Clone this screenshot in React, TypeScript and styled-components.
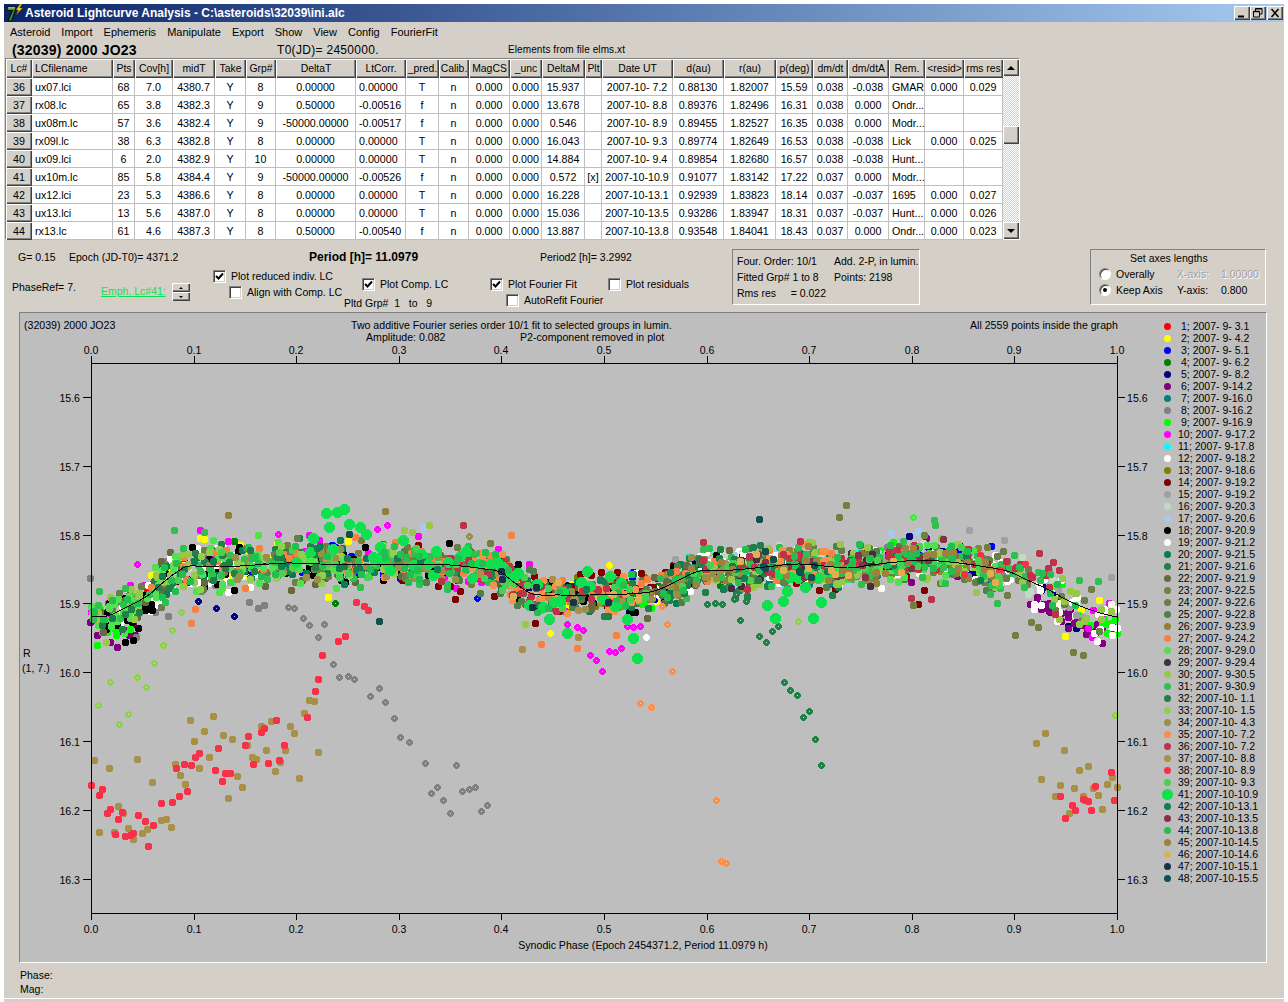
import React from "react";
import styled, { createGlobalStyle } from "styled-components";

const FONT = `"Liberation Sans", Arial, sans-serif`;
const FACE = "#d4d0c8";
const PLOT = "#bebebe";

const Global = createGlobalStyle`
  html, body { margin: 0; padding: 0; background: #fff; }
  body { font: 11px ${FONT}; color: #000; overflow: hidden; }
`;

const Page = styled.div`
  width: 1288px;
  height: 1002px;
  padding: 4px 4px 0;
  box-sizing: border-box;
  display: flex;
  flex-direction: column;
`;
const Win = styled.div`
  width: 1280px;
  height: 994px;
  background: ${FACE};
  display: flex;
  flex-direction: column;
  flex: none;
`;
const BottomStrip = styled.div`
  margin-top: 1px;
  height: 3px;
  background: ${FACE};
`;
const TitleBar = styled.div`
  height: 18px;
  display: flex;
  align-items: center;
  background: linear-gradient(90deg, #0a246a, #a6caf0);
  color: #fff;
  font-weight: bold;
  font-size: 12px;
  padding-left: 2px;
  padding-right: 1px;
`;
const TitleText = styled.span`
  margin-left: 2px;
  flex: 1;
  white-space: pre;
`;
const CapBtn = styled.button<{ $gap?: number }>`
  width: 16px;
  height: 14px;
  padding: 0;
  margin: 0 0 0 ${(p) => p.$gap ?? 0}px;
  border: 0;
  background: ${FACE};
  box-shadow: inset 1px 1px 0 #fff, inset -1px -1px 0 #404040, inset -2px -2px 0 #808080;
  display: flex;
  align-items: center;
  justify-content: center;
`;
const Menu = styled.div`
  height: 19px;
  display: flex;
  align-items: center;
  gap: 11px;
  padding-left: 6px;
`;
const MenuItem = styled.span`
  font-size: 11px;
  white-space: pre;
`;
const InfoRow = styled.div`
  height: 17px;
  display: flex;
  align-items: center;
  padding-left: 8px;
`;
const AstName = styled.span`
  width: 265px;
  font-weight: bold;
  font-size: 14px;
  letter-spacing: 0.2px;
`;
const T0 = styled.span`
  width: 231px;
  font-size: 12px;
  letter-spacing: 0.3px;
`;
const ElemText = styled.span`
  font-size: 10px;
  letter-spacing: 0.1px;
`;

const TableWrap = styled.div`
  margin-left: 1px;
  width: 1015px;
  height: 182px;
  box-sizing: border-box;
  display: flex;
  border-top: 1px solid #808080;
  border-left: 1px solid #808080;
  border-bottom: 1px solid #fff;
  border-right: 1px solid #fff;
  background: #fff;
`;
const Grid = styled.table`
  table-layout: fixed;
  border-collapse: separate;
  border-spacing: 0;
  width: 997px;
  font-size: 10.7px;
`;
const HeadCell = styled.th<{ $left?: boolean }>`
  height: 19px;
  padding: ${(p) => (p.$left ? "0 0 0 3px" : "0")};
  font-weight: normal;
  font-size: 10.4px;
  text-align: ${(p) => (p.$left ? "left" : "center")};
  white-space: nowrap;
  overflow: hidden;
  background: ${FACE};
  box-shadow: inset 1px 1px 0 #fff, inset -1px -1px 0 #404040, inset -2px -2px 0 #808080;
`;
const RowHead = styled.td`
  height: 18px;
  padding: 0;
  text-align: center;
  background: ${FACE};
  box-shadow: inset 1px 1px 0 #fff, inset -1px -1px 0 #404040, inset -2px -2px 0 #808080;
`;
const Cell = styled.td<{ $align?: string }>`
  height: 18px;
  box-sizing: border-box;
  padding: ${(p) => (p.$align === "left" ? "0 0 0 3px" : "0")};
  text-align: ${(p) => p.$align ?? "center"};
  white-space: pre;
  overflow: hidden;
  border-right: 1px solid #c0c0c0;
  border-bottom: 1px solid #c0c0c0;
`;
const ScrollBar = styled.div`
  width: 16px;
  display: flex;
  flex-direction: column;
  height: 180px;
`;
const ScrollBtn = styled.div<{ $h?: number }>`
  height: ${(p) => p.$h ?? 17}px;
  flex: none;
  background: ${FACE};
  box-shadow: inset 1px 1px 0 #fff, inset -1px -1px 0 #404040, inset -2px -2px 0 #808080;
  display: flex;
  align-items: center;
  justify-content: center;
`;
const ScrollTrack = styled.div<{ $h?: number }>`
  ${(p) => (p.$h ? `height:${p.$h}px;flex:none;` : "flex:1;")}
  background: repeating-conic-gradient(#fff 0 25%, ${FACE} 0 50%) 0 0 / 2px 2px;
`;
const Arrow = styled.span<{ $up?: boolean }>`
  width: 0;
  height: 0;
  border-left: 4px solid transparent;
  border-right: 4px solid transparent;
  ${(p) => (p.$up ? "border-bottom: 4px solid #000;" : "border-top: 4px solid #000;")}
`;

const Controls = styled.div`
  height: 72px;
  display: flex;
  flex: none;
  font-size: 10.5px;
`;
const LeftCol = styled.div`
  width: 728px;
  flex: none;
`;
const StatusRow = styled.div`
  display: flex;
  height: 14px;
  line-height: 14px;
  padding: 10px 0 0 14px;
`;
const StatusItem = styled.span<{ $w: number; $bold?: boolean }>`
  width: ${(p) => p.$w}px;
  flex: none;
  white-space: pre;
  font-weight: ${(p) => (p.$bold ? "bold" : "normal")};
  font-size: ${(p) => (p.$bold ? "12px" : "10.5px")};
`;
const OptionsRow = styled.div`
  display: flex;
  height: 48px;
  padding-left: 8px;
`;
const PhaseRef = styled.span`
  width: 89px;
  flex: none;
  margin-top: 16px;
  line-height: 14px;
`;
const Emph = styled.span`
  width: 71px;
  flex: none;
  margin-top: 20px;
  line-height: 14px;
  color: #10e050;
  text-decoration: underline;
`;
const SpinWrap = styled.div`
  width: 41px;
  flex: none;
  margin-top: 19px;
  display: flex;
  flex-direction: column;
`;
const SpinBtn = styled.div`
  width: 18px;
  height: 9px;
  background: ${FACE};
  box-shadow: inset 1px 1px 0 #fff, inset -1px -1px 0 #404040, inset -2px -2px 0 #808080;
  display: flex;
  align-items: center;
  justify-content: center;
`;
const SpinArrow = styled.span<{ $up?: boolean }>`
  width: 0;
  height: 0;
  border-left: 2px solid transparent;
  border-right: 2px solid transparent;
  ${(p) => (p.$up ? "border-bottom: 2px solid #000;" : "border-top: 2px solid #000;")}
`;
const OptCol = styled.div<{ $w: number; $top: number; $gap?: number }>`
  width: ${(p) => p.$w}px;
  flex: none;
  padding-top: ${(p) => p.$top}px;
  display: flex;
  flex-direction: column;
  gap: ${(p) => p.$gap ?? 0}px;
`;
const CheckRow = styled.label<{ $indent?: number }>`
  display: flex;
  align-items: center;
  height: 16px;
  gap: 5px;
  padding-left: ${(p) => p.$indent ?? 0}px;
  white-space: pre;
`;
const Box = styled.span`
  width: 13px;
  height: 13px;
  flex: none;
  box-sizing: border-box;
  background: #fff;
  border-top: 1px solid #808080;
  border-left: 1px solid #808080;
  border-right: 1px solid #fff;
  border-bottom: 1px solid #fff;
  box-shadow: inset 1px 1px 0 #404040, inset -1px -1px 0 ${FACE};
  display: flex;
  align-items: center;
  justify-content: center;
`;
const PltdText = styled.span`
  height: 16px;
  line-height: 16px;
  white-space: pre;
`;
const Group = styled.div<{ $ml: number; $w: number }>`
  margin: 9px 0 0 ${(p) => p.$ml}px;
  width: ${(p) => p.$w}px;
  height: 56px;
  box-sizing: border-box;
  flex: none;
  border-top: 1px solid #808080;
  border-left: 1px solid #808080;
  border-right: 1px solid #fff;
  border-bottom: 1px solid #fff;
`;
const FourierGrid = styled.div`
  padding: 3px 0 0 4px;
  display: grid;
  grid-template-columns: 97px 1fr;
  grid-auto-rows: 16px;
  align-items: center;
  white-space: pre;
`;
const AxesTitle = styled.div`
  height: 15px;
  padding-top: 1px;
  line-height: 14px;
  padding-left: 39px;
`;
const AxesGrid = styled.div`
  padding: 0 0 0 8px;
  display: grid;
  grid-template-columns: 78px 44px 1fr;
  grid-auto-rows: 16px;
  align-items: center;
`;
const RadioRow = styled.span`
  display: flex;
  align-items: center;
  gap: 5px;
`;
const Radio = styled.span<{ $on?: boolean }>`
  width: 12px;
  height: 12px;
  box-sizing: border-box;
  border-radius: 50%;
  background: #fff;
  border: 1px solid;
  border-color: #808080 #fff #fff #808080;
  box-shadow: inset 1px 1px 0 #404040;
  display: flex;
  align-items: center;
  justify-content: center;
  &::after {
    content: "";
    width: 4px;
    height: 4px;
    border-radius: 50%;
    background: ${(p) => (p.$on ? "#000" : "transparent")};
  }
`;
const Disabled = styled.span`
  color: #a0a0a0;
  text-shadow: 1px 1px 0 #fff;
`;

const PlotPanel = styled.div`
  margin-left: 15px;
  width: 1248px;
  height: 651px;
  flex: none;
  box-sizing: border-box;
  background: ${PLOT};
  border-top: 1px solid #808080;
  border-left: 1px solid #808080;
  border-right: 1px solid #fff;
  border-bottom: 1px solid #fff;
  display: flex;
`;
const ChartSvg = styled.svg`
  display: block;
  flex: none;
  width: 1140px;
  height: 649px;
`;
const SvgText = styled.text`
  font: 10.6px ${FONT};
  fill: #000;
`;
const AxisPart = styled.path`
  stroke: #000;
  stroke-width: 1;
  fill: none;
  shape-rendering: crispEdges;
`;
const FitCurve = styled.path`
  stroke: #000;
  stroke-width: 1;
  fill: none;
  shape-rendering: crispEdges;
`;
const Dots = styled.g`
  shape-rendering: crispEdges;
`;
const Legend = styled.div`
  padding-top: 7px;
  display: flex;
  flex-direction: column;
  font-size: 10.5px;
`;
const LegendRow = styled.div`
  height: 12px;
  display: flex;
  align-items: center;
  white-space: pre;
`;
const DotSlot = styled.span`
  width: 14px;
  margin-right: 4px;
  display: flex;
  align-items: center;
  justify-content: center;
`;
const Dot = styled.span<{ $big?: boolean }>`
  width: ${(p) => (p.$big ? 11 : 7)}px;
  height: ${(p) => (p.$big ? 11 : 7)}px;
  border-radius: 50%;
  flex: none;
`;
const LegendLabel = styled.span<{ $single?: boolean }>`
  padding-left: ${(p) => (p.$single ? 3 : 0)}px;
`;
const StatusBar = styled.div`
  flex: 1;
  padding: 5px 0 0 16px;
  line-height: 14px;
  font-size: 10.5px;
`;

const HEAD: [string, number][] = [
  ["Lc#", 26], ["LCfilename", 81], ["Pts", 22], ["Cov[h]", 38], ["midT", 42], ["Take", 31], ["Grp#", 30],
  ["DeltaT", 80], ["LtCorr.", 50], ["_pred.", 33], ["Calib.", 30], ["MagCS", 41], ["_unc", 32], ["DeltaM", 43],
  ["Plt", 17], ["Date UT", 71], ["d(au)", 51], ["r(au)", 52], ["p(deg)", 37], ["dm/dt", 35], ["dm/dtA", 41],
  ["Rem.", 36], ["<resid>", 39], ["rms res", 39],
];
const LEFT = new Set([1, 8, 21]);
const ROWS: string[][] = [
  ["36","ux07.lci","68","7.0","4380.7","Y","8","0.00000","0.00000","T","n","0.000","0.000","15.937","","2007-10- 7.2","0.88130","1.82007","15.59","0.038","-0.038","GMAR","0.000","0.029"],
  ["37","rx08.lc","65","3.8","4382.3","Y","9","0.50000","-0.00516","f","n","0.000","0.000","13.678","","2007-10- 8.8","0.89376","1.82496","16.31","0.038","0.000","Ondr...","",""],
  ["38","ux08m.lc","57","3.6","4382.4","Y","9","-50000.00000","-0.00517","f","n","0.000","0.000","0.546","","2007-10- 8.9","0.89455","1.82527","16.35","0.038","0.000","Modr...","",""],
  ["39","rx09l.lc","38","6.3","4382.8","Y","8","0.00000","0.00000","T","n","0.000","0.000","16.043","","2007-10- 9.3","0.89774","1.82649","16.53","0.038","-0.038","Lick","0.000","0.025"],
  ["40","ux09.lci","6","2.0","4382.9","Y","10","0.00000","0.00000","T","n","0.000","0.000","14.884","","2007-10- 9.4","0.89854","1.82680","16.57","0.038","-0.038","Hunt...","",""],
  ["41","ux10m.lc","85","5.8","4384.4","Y","9","-50000.00000","-0.00526","f","n","0.000","0.000","0.572","[x]","2007-10-10.9","0.91077","1.83142","17.22","0.037","0.000","Modr...","",""],
  ["42","ux12.lci","23","5.3","4386.6","Y","8","0.00000","0.00000","T","n","0.000","0.000","16.228","","2007-10-13.1","0.92939","1.83823","18.14","0.037","-0.037","1695","0.000","0.027"],
  ["43","ux13.lci","13","5.6","4387.0","Y","8","0.00000","0.00000","T","n","0.000","0.000","15.036","","2007-10-13.5","0.93286","1.83947","18.31","0.037","-0.037","Hunt...","0.000","0.026"],
  ["44","rx13.lc","61","4.6","4387.3","Y","8","0.50000","-0.00540","f","n","0.000","0.000","13.887","","2007-10-13.8","0.93548","1.84041","18.43","0.037","0.000","Ondr...","0.000","0.023"],
];

const SERIES: [number, string, string][] = [
  [1,"2007- 9- 3.1","#ff0000"],[2,"2007- 9- 4.2","#ffff00"],[3,"2007- 9- 5.1","#0000ff"],[4,"2007- 9- 6.2","#008000"],
  [5,"2007- 9- 8.2","#000080"],[6,"2007- 9-14.2","#800080"],[7,"2007- 9-16.0","#008080"],[8,"2007- 9-16.2","#808080"],
  [9,"2007- 9-16.9","#00ff00"],[10,"2007- 9-17.2","#ff00ff"],[11,"2007- 9-17.8","#00ffff"],[12,"2007- 9-18.2","#ffffff"],
  [13,"2007- 9-18.6","#808000"],[14,"2007- 9-19.2","#800000"],[15,"2007- 9-19.2","#a0a0a4"],[16,"2007- 9-20.3","#c0dcc0"],
  [17,"2007- 9-20.6","#a6caf0"],[18,"2007- 9-20.9","#000000"],[19,"2007- 9-21.2","#fffbf0"],[20,"2007- 9-21.5","#008050"],
  [21,"2007- 9-21.6","#208048"],[22,"2007- 9-21.9","#686840"],[23,"2007- 9-22.5","#708040"],[24,"2007- 9-22.6","#688048"],
  [25,"2007- 9-22.8","#508048"],[26,"2007- 9-23.9","#908038"],[27,"2007- 9-24.2","#f88040"],[28,"2007- 9-29.0","#50e050"],
  [29,"2007- 9-29.4","#403040"],[30,"2007- 9-30.5","#98c848"],[31,"2007- 9-30.9","#30c050"],[32,"2007-10- 1.1","#208048"],
  [33,"2007-10- 1.5","#90d050"],[34,"2007-10- 4.3","#989048"],[35,"2007-10- 7.2","#f89048"],[36,"2007-10- 7.2","#c03048"],
  [37,"2007-10- 8.8","#a89048"],[38,"2007-10- 8.9","#f83048"],[39,"2007-10- 9.3","#48d050"],[41,"2007-10-10.9","#10e050"],
  [42,"2007-10-13.1","#108050"],[43,"2007-10-13.5","#883048"],[44,"2007-10-13.8","#20c050"],[45,"2007-10-14.5","#a08040"],
  [46,"2007-10-14.6","#e0b050"],[47,"2007-10-15.1","#183048"],[48,"2007-10-15.5","#105050"],
];
const COLOR: Record<number, string> = Object.fromEntries(SERIES.map((s) => [s[0], s[2]]));

const CTRL: [number, number][] = [
  [91,617],[107,617],[123,610],[137,603],[150,595],[160,586],[170,578],[180,571],[190,567],[220,568],[255,566],[287,564],[320,565],[370,566],[420,565],
  [450,566],[470,568],[485,570],[500,573],[515,584],[533,595],[560,596],[590,596],[627,595],[650,593],[665,588],[677,582],[700,572],[733,571],[765,568],[800,565],
  [847,569],[870,566],[897,563],[920,561],[950,563],[980,567],[1007,572],[1025,580],[1047,590],[1065,600],[1080,607],[1100,614],[1117,618],
];
const curveY = (x: number) => {
  for (let i = 1; i < CTRL.length; i++) {
    if (x <= CTRL[i][0]) {
      const [a, b] = CTRL[i - 1];
      const [c, d] = CTRL[i];
      return b + ((d - b) * (x - a)) / (c - a);
    }
  }
  return 618;
};
const fitPath = () => {
  let d = `M${CTRL[0][0]} ${CTRL[0][1]}`;
  for (let i = 0; i < CTRL.length - 1; i++) {
    const p0 = CTRL[Math.max(i - 1, 0)];
    const p1 = CTRL[i];
    const p2 = CTRL[i + 1];
    const p3 = CTRL[Math.min(i + 2, CTRL.length - 1)];
    d += `C${p1[0] + (p2[0] - p0[0]) / 6} ${p1[1] + (p2[1] - p0[1]) / 6} ${p2[0] - (p3[0] - p1[0]) / 6} ${p2[1] - (p3[1] - p1[1]) / 6} ${p2[0]} ${p2[1]}`;
  }
  return d;
};

type Pt = { s: number; x: number; y: number; c?: boolean };
const BANDS: [number, number, number, number, number, number][] = [
  [1,100,260,10,8,0],
  [2,120,330,25,10,0],[2,540,660,6,9,0],[2,780,960,6,9,0],[2,1040,1100,6,9,4],
  [3,250,420,25,8,0],[3,620,700,6,8,0],[3,880,1000,10,8,0],
  [4,130,300,10,9,0],[4,650,800,15,9,0],
  [5,480,700,8,8,2],[5,880,1000,15,8,-2],[5,1040,1075,6,7,2],
  [6,91,135,12,10,12],[6,1030,1115,30,5,16],[6,900,960,5,8,0],[6,560,640,4,8,0],
  [7,760,880,25,7,3],
  [8,130,300,20,10,10],[8,880,1010,12,9,-3],
  [9,91,140,14,10,8],[9,640,760,25,8,3],[9,1060,1117,14,10,10],[9,860,960,10,8,2],
  [10,91,160,10,8,-6],[10,190,420,12,10,-8],[10,440,620,10,8,6],[10,1080,1117,5,7,8],
  [11,660,810,35,7,0],[11,840,920,8,8,-2],
  [12,120,260,70,8,4],[12,600,780,40,8,2],[12,1000,1117,22,9,6],
  [13,550,700,15,8,0],
  [14,380,560,18,9,6],[14,570,680,25,7,-6],[14,780,930,12,8,3],
  [15,640,900,20,8,0],[15,1000,1090,8,8,0],
  [16,700,1100,25,9,-2],
  [17,640,1000,30,9,-4],
  [18,95,450,80,9,3],[18,480,680,45,8,0],[18,690,800,15,8,-1],
  [19,700,1000,45,9,0],[19,1040,1117,14,9,6],
  [20,150,500,35,9,-4],[20,500,700,28,8,0],
  [21,150,500,35,9,-3],[21,600,860,50,9,4],
  [22,100,450,40,10,2],[22,480,780,55,9,2],
  [23,150,500,35,9,-2],[23,700,1050,40,9,0],
  [24,91,500,30,9,0],[24,750,1100,50,8,1],
  [25,400,700,50,9,0],[25,750,1000,50,8,1],
  [26,640,1000,50,7,2],
  [27,150,500,55,9,-2],[27,480,700,25,8,0],[27,700,850,10,8,0],
  [28,91,350,90,10,-2],[28,800,1000,50,8,0],
  [29,700,900,40,8,0],
  [30,91,200,22,9,0],[30,700,1117,70,9,2],
  [31,91,500,60,9,0],[31,680,1050,90,8,0],
  [32,100,400,30,8,0],[32,480,780,60,8,0],
  [33,150,400,25,9,-2],
  [34,200,500,30,7,0],[34,550,800,30,7,2],
  [35,470,640,45,8,2],[35,760,830,15,8,0],
  [36,430,620,45,8,-1],[36,700,1060,45,9,-4],
  [37,480,640,15,8,0],
  [38,960,1040,5,8,0],
  [39,150,1000,80,7,0],
  [42,100,1000,30,8,0],
  [43,750,1010,20,8,-3],
  [44,91,1100,100,8,0],
  [45,680,1000,30,7,1],
  [46,500,1000,15,8,0],
  [47,500,640,6,8,4],
  [48,760,820,8,7,4],
];
const at = (ox: number, oy: number, s: number, list: number[][], c?: boolean): Pt[] =>
  list.map(([a, b]) => ({ s, x: ox + a / 3, y: oy + b / 3, c }));

const buildPoints = (): Pt[] => {
  let seed = 20070907;
  const rnd = () => {
    seed = (seed + 0x6d2b79f5) | 0;
    let t = Math.imul(seed ^ (seed >>> 15), 1 | seed);
    t = (t + Math.imul(t ^ (t >>> 7), 61 | t)) ^ t;
    return ((t ^ (t >>> 14)) >>> 0) / 4294967296;
  };
  const gauss = () => {
    const v = Math.sqrt(-2 * Math.log(rnd() + 1e-9)) * Math.cos(2 * Math.PI * rnd());
    return Math.max(-2.2, Math.min(2.2, v));
  };
  const pts: Pt[] = [];
  for (const [s, a, b, n, sig, off] of BANDS) {
    for (let i = 0; i < n; i++) {
      const x = a + rnd() * (b - a);
      pts.push({ s, x, y: curveY(x) + off + gauss() * sig * 1.25 });
    }
  }
  pts.push(
    ...at(90,600,38,[[5,558],[38,571],[28,589],[60,630],[52,643],[97,640],[85,661],[145,649],[166,667],[190,679],[76,706],[106,712],[122,710],[130,702],[175,742],[214,613],[247,610],[268,592],[292,577],[397,547],[376,514],[405,523],[420,523],[259,507],[283,496],[305,499],[316,475],[328,463],[385,448],[466,439],[475,412],[490,496],[535,493],[568,484],[583,439],[514,400],[523,387],[559,364],[652,355],[676,277],[685,241],[697,169],[745,127],[766,112],[799,10],[823,22],[835,34]]),
    ...at(90,600,37,[[13,484],[58,508],[142,481],[187,550],[85,622],[100,643],[28,700],[73,700],[115,688],[130,721],[157,703],[172,691],[214,664],[229,661],[244,685],[256,496],[271,529],[286,556],[328,508],[358,475],[313,427],[343,397],[301,364],[370,352],[400,409],[427,421],[442,532],[457,565],[415,598],[472,439],[487,475],[499,481],[529,454],[556,517],[571,490],[586,454],[628,538],[685,460],[613,403],[601,382],[514,382],[544,367],[643,343],[658,304],[673,307]]),
    ...at(90,600,8,[[595,25],[613,28],[640,58],[658,79],[703,76],[685,115],[730,196],[748,235],[775,232],[793,241],[868,268],[841,292],[886,310],[913,358],[931,415],[958,430],[1006,493],[1099,499],[1042,565],[1024,583],[1060,604],[1081,643],[1117,577],[1138,571],[1156,565],[1174,637],[1192,619]],true),
    ...at(90,600,33,[[274,40],[247,94],[220,139],[193,193],[142,235],[61,250],[169,265],[25,319],[115,346],[88,376]],true),
    ...at(90,600,5,[[325,7],[379,28],[433,52]],true),
    ...at(90,600,8,[[235,52],[478,10],[505,28],[523,19]]),
    ...at(90,600,27,[[316,31],[304,73]]),
    ...at(90,600,48,[[868,67]]),
    ...at(600,660,35,[[217,37],[121,133],[154,145],[349,424],[364,607],[379,613]],true),
    ...at(600,660,21,[[553,70],[571,94],[592,109],[628,157],[610,175],[646,241],[664,319]],true),
    ...at(600,660,33,[[1546,169]],true),
    ...at(600,660,37,[[1336,223],[1309,253],[1393,274],[1465,322],[1438,334],[1324,361],[1381,379],[1423,388],[1480,388],[1522,376],[1537,355],[1551,385],[1495,409],[1450,412],[1366,412],[1507,451],[1408,463]]),
    ...at(600,660,38,[[1534,340],[1486,382],[1381,412],[1450,421],[1456,424],[1465,427],[1417,439],[1426,454],[1474,454],[1543,424],[1396,478]]),
    ...at(400,500,10,[[502,376],[532,385],[550,394],[571,469],[589,484],[607,517],[628,457],[646,460],[664,448],[682,382],[700,385],[721,382]],true),
    ...at(400,500,27,[[424,436],[532,448],[649,409],[334,109]]),
    ...at(400,500,35,[[817,517],[801,376],[787,322]],true),
    ...at(400,500,2,[[451,403],[628,199]],true),
    ...at(400,500,12,[[739,415]],true),
    ...at(400,500,3,[[232,298]],true),
    ...at(400,500,14,[[166,301]]),
    ...at(400,500,36,[[190,79]]),
    ...at(400,500,10,[[295,151],[388,196]]),
    ...at(400,500,48,[[1078,61]]),
    ...at(400,500,21,[[1021,364],[1078,412],[1099,430],[1117,397],[1135,382],[921,316],[945,313],[967,316],[1003,301],[1039,307],[987,259],[1009,286]],true),
    ...at(400,500,30,[[13,94],[37,100],[88,79],[376,376]]),
    ...at(400,500,17,[[70,85]]),
    ...at(400,500,37,[[367,451],[535,415]]),
    ...at(400,500,34,[[208,112]],true),
    ...at(780,500,23,[[199,19],[178,55],[754,370],[775,385],[706,409],[880,460],[910,469],[934,271]]),
    ...at(780,500,28,[[400,55]],true),
    ...at(780,500,31,[[463,64],[466,79],[898,244],[955,247],[652,313],[630,286]]),
    ...at(780,500,15,[[568,94],[673,124],[994,235]]),
    ...at(780,500,36,[[778,163],[820,190],[838,214],[454,301],[394,298]]),
    ...at(780,500,14,[[415,316],[433,274]]),
    ...at(780,500,23,[[400,319]]),
    ...at(780,500,33,[[55,367]],true),
    ...at(780,500,5,[[865,382],[889,388]]),
    ...at(780,500,2,[[856,412]]),
    ...at(780,500,9,[[982,403],[1012,403]]),
    ...at(780,500,12,[[1011,388]]),
    ...at(780,500,6,[[786,322],[804,331],[825,337],[843,343],[861,343]]),
    ...at(20,500,26,[[625,49],[1096,37]]),
    ...at(20,500,31,[[463,94],[553,100]]),
    ...at(20,500,10,[[1072,91],[1102,79],[775,106],[352,196]],true),
    ...at(20,500,2,[[985,127],[925,295]]),
    ...at(20,500,48,[[988,106],[1077,367]]),
    ...at(20,500,8,[[210,238],[445,352]]),
    ...at(20,500,5,[[536,307],[590,328],[643,352]],true),
    ...at(20,500,4,[[945,313]],true),
    ...at(20,500,33,[[485,340],[457,394],[430,439],[403,493],[352,535],[270,550],[379,565]],true),
    ...at(20,500,27,[[514,373],[527,331]]),
    ...at(20,500,6,[[210,370],[232,409],[327,409],[345,409]]),
    ...at(20,500,18,[[340,424],[316,430]]),
    ...at(20,500,30,[[259,430]]),
    ...at(400,500,41,[[10,125],[65,165],[110,157],[40,200],[85,196],[100,229],[145,190],[180,172],[200,157],[217,238],[238,196],[270,196],[292,190],[310,205],[335,232],[355,223],[412,256],[388,319],[430,325],[448,361],[463,310],[481,307],[490,280],[502,403],[543,250],[562,217],[572,262],[610,300],[631,232],[664,253],[646,322],[682,361],[700,418],[712,478],[1102,319],[1126,358],[1150,307],[1162,277],[1140,223],[1170,235]]),
    ...at(780,500,41,[[30,235],[55,238],[75,265],[10,307],[22,277],[115,238],[124,310],[100,358],[155,220]]),
    ...at(20,500,41,[[918,42],[951,40],[972,31],[927,85],[988,76],[1020,85],[1038,105],[879,118],[1150,124],[828,190],[870,160],[940,150],[1080,145],[1060,175],[1090,185],[1110,215],[1185,200]]),
  );
  return pts.filter((p) => p.x <= 1118).sort((a, b) => a.s - b.s);
};
const POINTS = buildPoints();

const Marker = ({ p }: { p: Pt }) => {
  const x = Math.floor(p.x) + 0.5;
  const y = Math.floor(p.y) + 0.5;
  const fill = COLOR[p.s];
  if (p.c) {
    return (
      <g transform={`translate(${x} ${y})`}>
        <path d="M-1.5-3.5h3v1h1v1h1v3h-1v1h-1v1h-3v-1h-1v-1h-1v-3h1v-1h1z" fill={fill} />
        <rect x={-0.5} y={-0.5} width={1} height={1} fill="#fff" opacity={0.7} />
      </g>
    );
  }
  return <circle cx={x} cy={y} r={p.s === 41 ? 5.6 : 3.6} fill={fill} />;
};

const XS = Array.from({ length: 11 }, (_, i) => i / 10);
const YS = [15.6, 15.7, 15.8, 15.9, 16.0, 16.1, 16.2, 16.3];
const px = (v: number) => Math.round(91 + v * 1026);
const py = (v: number) => Math.round(398 + (v - 15.6) * 688);

const Check = () => (
  <svg width="9" height="9" viewBox="0 0 9 9">
    <path d="M1 4l2.5 2.5L8 1.5" fill="none" stroke="#000" strokeWidth="2" />
  </svg>
);

const AppIcon = () => (
  <svg width="17" height="18" viewBox="0 0 17 18">
    <path d="M1 3h9.500L5.500 17H2l4.500-10.500H1z" fill="#2f9a4a" stroke="#101000" strokeWidth="1.200" />
    <path d="M2 3.800h7" stroke="#e8e060" strokeWidth="1" />
    <path d="M14 0l-4 6h2.500L10 11l6.500-7H13.500L16 0z" fill="#f8e000" stroke="#604000" strokeWidth="0.400" />
  </svg>
);

export default function App() {
  return (
    <Page>
      <Global />
      <Win>
        <TitleBar>
          <AppIcon />
          <TitleText>{"Asteroid Lightcurve Analysis - C:\\asteroids\\32039\\ini.alc"}</TitleText>
          <CapBtn>
            <svg width="10" height="10" viewBox="0 0 10 10"><path d="M1 7.500h6v2H1z" /></svg>
          </CapBtn>
          <CapBtn>
            <svg width="10" height="10" viewBox="0 0 10 10">
              <path d="M2.500 3V0.500h6.500v5.500H7M0.500 3.500h6v5.500h-6z M2.500 1h6" fill="none" stroke="#000" />
              <path d="M0.500 3.500h6" stroke="#000" strokeWidth="1.500" />
            </svg>
          </CapBtn>
          <CapBtn $gap={1}>
            <svg width="10" height="10" viewBox="0 0 10 10">
              <path d="M1.500 1L8.500 9M8.500 1L1.500 9" stroke="#000" strokeWidth="1.600" />
            </svg>
          </CapBtn>
        </TitleBar>
        <Menu>
          {["Asteroid","Import","Ephemeris","Manipulate","Export","Show","View","Config","FourierFit"].map((m) => (
            <MenuItem key={m}>{m}</MenuItem>
          ))}
        </Menu>
        <InfoRow>
          <AstName>(32039) 2000 JO23</AstName>
          <T0>T0(JD)= 2450000.</T0>
          <ElemText>Elements from file elms.xt</ElemText>
        </InfoRow>
        <TableWrap>
          <Grid>
            <colgroup>
              {HEAD.map(([h, w]) => (
                <col key={h} style={{ width: w }} />
              ))}
            </colgroup>
            <thead>
              <tr>
                {HEAD.map(([h], i) => (
                  <HeadCell key={h} $left={i === 1}>{h}</HeadCell>
                ))}
              </tr>
            </thead>
            <tbody>
              {ROWS.map((r) => (
                <tr key={r[0]}>
                  {r.map((v, i) =>
                    i === 0 ? (
                      <RowHead key={i}>{v}</RowHead>
                    ) : (
                      <Cell key={i} $align={LEFT.has(i) ? "left" : undefined}>
                        {v}
                      </Cell>
                    ),
                  )}
                </tr>
              ))}
            </tbody>
          </Grid>
          <ScrollBar>
            <ScrollBtn><Arrow $up /></ScrollBtn>
            <ScrollTrack $h={50} />
            <ScrollBtn $h={18} />
            <ScrollTrack />
            <ScrollBtn><Arrow /></ScrollBtn>
          </ScrollBar>
        </TableWrap>
        <Controls>
          <LeftCol>
            <StatusRow>
              <StatusItem $w={51}>G= 0.15</StatusItem>
              <StatusItem $w={240}>Epoch (JD-T0)= 4371.2</StatusItem>
              <StatusItem $w={231} $bold>Period [h]= 11.0979</StatusItem>
              <StatusItem $w={150}>Period2 [h]= 3.2992</StatusItem>
            </StatusRow>
            <OptionsRow>
              <PhaseRef>PhaseRef= 7.</PhaseRef>
              <Emph>Emph. Lc#41:</Emph>
              <SpinWrap>
                <SpinBtn><SpinArrow $up /></SpinBtn>
                <SpinBtn><SpinArrow /></SpinBtn>
              </SpinWrap>
              <OptCol $w={131} $top={4}>
                <CheckRow><Box><Check /></Box>Plot reduced indiv. LC</CheckRow>
                <CheckRow $indent={16}><Box />Align with Comp. LC</CheckRow>
              </OptCol>
              <OptCol $w={146} $top={12} $gap={3}>
                <CheckRow $indent={18}><Box><Check /></Box>Plot Comp. LC</CheckRow>
                <PltdText>Pltd Grp#  1   to   9</PltdText>
              </OptCol>
              <OptCol $w={118} $top={12}>
                <CheckRow><Box><Check /></Box>Plot Fourier Fit</CheckRow>
                <CheckRow $indent={16}><Box />AutoRefit Fourier</CheckRow>
              </OptCol>
              <OptCol $w={100} $top={12}>
                <CheckRow><Box />Plot residuals</CheckRow>
              </OptCol>
            </OptionsRow>
          </LeftCol>
          <Group $ml={0} $w={188}>
            <FourierGrid>
              <span>Four. Order: 10/1</span>
              <span>Add. 2-P, in lumin.</span>
              <span>Fitted Grp# 1 to 8</span>
              <span>Points: 2198</span>
              <span>{"Rms res     = 0.022"}</span>
            </FourierGrid>
          </Group>
          <Group $ml={170} $w={176}>
            <AxesTitle>Set axes lengths</AxesTitle>
            <AxesGrid>
              <RadioRow><Radio />Overally</RadioRow>
              <Disabled>X-axis:</Disabled>
              <Disabled>1.00000</Disabled>
              <RadioRow><Radio $on />Keep Axis</RadioRow>
              <span>Y-axis:</span>
              <span>0.800</span>
            </AxesGrid>
          </Group>
        </Controls>
        <PlotPanel>
          <ChartSvg viewBox="20 314 1140 649">
            <Dots>
              {POINTS.map((p, i) => (
                <Marker key={i} p={p} />
              ))}
            </Dots>
            <FitCurve d={fitPath()} />
            <AxisPart d="M91 364H1117V914H91Z" />
            {XS.map((v) => (
              <React.Fragment key={v}>
                <AxisPart d={`M${px(v)} 357V364M${px(v)} 914V921`} />
                <SvgText x={px(v)} y={355} textAnchor="middle">{v.toFixed(1)}</SvgText>
                <SvgText x={px(v)} y={934} textAnchor="middle">{v.toFixed(1)}</SvgText>
              </React.Fragment>
            ))}
            {YS.map((v) => (
              <React.Fragment key={v}>
                <AxisPart d={`M83 ${py(v)}H91M1117 ${py(v)}H1125`} />
                <SvgText x={80} y={py(v) + 5} textAnchor="end">{v.toFixed(1)}</SvgText>
                <SvgText x={1127} y={py(v) + 5}>{v.toFixed(1)}</SvgText>
              </React.Fragment>
            ))}
            <SvgText x={24} y={330}>(32039) 2000 JO23</SvgText>
            <SvgText x={351} y={330}>Two additive Fourier series order 10/1 fit to selected groups in lumin.</SvgText>
            <SvgText x={366} y={342}>Amplitude: 0.082</SvgText>
            <SvgText x={520} y={342}>P2-component removed in plot</SvgText>
            <SvgText x={970} y={330}>All 2559 points inside the graph</SvgText>
            <SvgText x={23} y={658}>R</SvgText>
            <SvgText x={22} y={673}>(1, 7.)</SvgText>
            <SvgText x={643} y={950} textAnchor="middle">Synodic Phase (Epoch 2454371.2, Period 11.0979 h)</SvgText>
          </ChartSvg>
          <Legend>
            {SERIES.map(([n, d, c]) => (
              <LegendRow key={n}>
                <DotSlot><Dot $big={n === 41} style={{ background: c }} /></DotSlot>
                <LegendLabel $single={n < 10}>{`${n}; ${d}`}</LegendLabel>
              </LegendRow>
            ))}
          </Legend>
        </PlotPanel>
        <StatusBar>
          <div>Phase:</div>
          <div>Mag:</div>
        </StatusBar>
      </Win>
      <BottomStrip />
    </Page>
  );
}
